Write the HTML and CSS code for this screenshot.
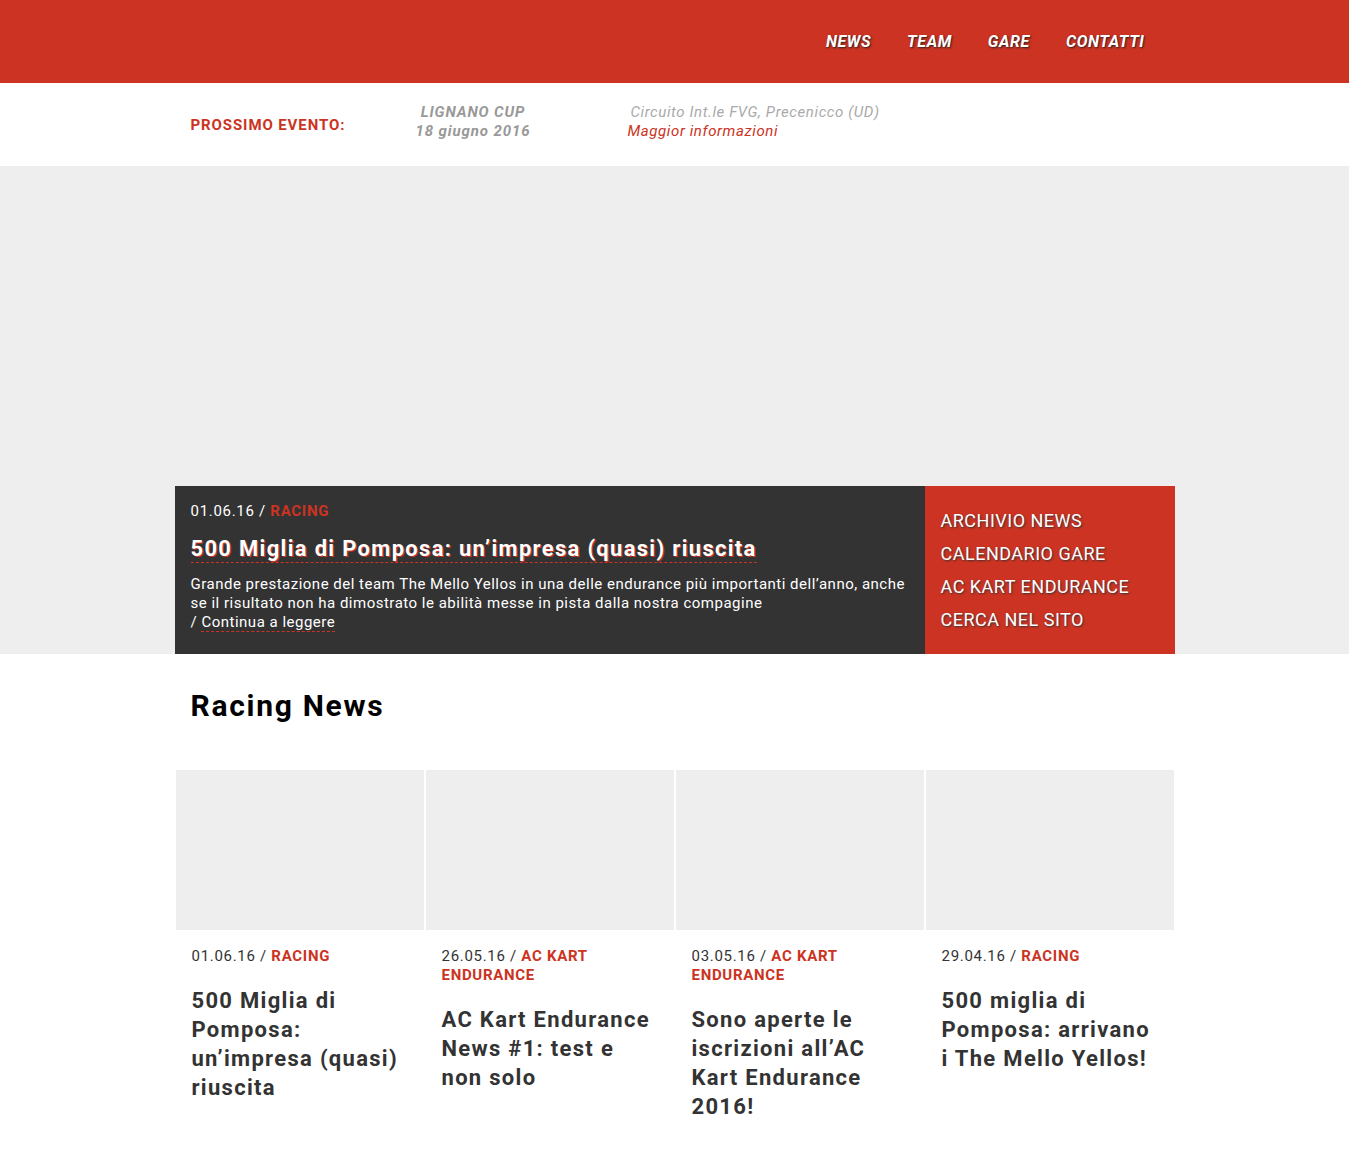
FILE: index.html
```html
<!DOCTYPE html>
<html lang="it">
<head>
<meta charset="utf-8">
<title>The Mello Yellos</title>
<link rel="stylesheet" href="styles.css">
</head>
<body>
<div class="page">
  <header class="topbar">
    <nav class="container nav">
      <a href="#">NEWS</a>
      <a href="#">TEAM</a>
      <a href="#">GARE</a>
      <a href="#">CONTATTI</a>
    </nav>
  </header>

  <section class="eventbar">
    <div class="container event">
      <div class="event-label">PROSSIMO EVENTO:</div>
      <div class="event-name">
        <div>LIGNANO CUP</div>
        <div>18 giugno 2016</div>
      </div>
      <div class="event-place">
        <div class="place">Circuito Int.le FVG, Precenicco (UD)</div>
        <a class="more" href="#">Maggior informazioni</a>
      </div>
    </div>
  </section>

  <section class="hero">
    <div class="container hero-inner">
      <article class="feature">
        <div class="meta light">01.06.16 / <span class="cat">RACING</span></div>
        <h1 class="feature-title"><a href="#">500 Miglia di Pomposa: un’impresa (quasi) riuscita</a></h1>
        <p class="feature-text">Grande prestazione del team The Mello Yellos in una delle endurance più importanti dell’anno, anche se il risultato non ha dimostrato le abilità messe in pista dalla nostra compagine<br>/ <a href="#">Continua a leggere</a></p>
      </article>
      <ul class="quicklinks">
        <li><a href="#">ARCHIVIO NEWS</a></li>
        <li><a href="#">CALENDARIO GARE</a></li>
        <li><a href="#">AC KART ENDURANCE</a></li>
        <li><a href="#">CERCA NEL SITO</a></li>
      </ul>
    </div>
  </section>

  <section class="container news">
    <h2 class="news-heading">Racing News</h2>
    <div class="cards">
      <article class="card">
        <div class="thumb"></div>
        <div class="card-body">
          <div class="meta">01.06.16 / <span class="cat">RACING</span></div>
          <h3>500 Miglia di Pomposa: un’impresa (quasi) riuscita</h3>
        </div>
      </article>
      <article class="card">
        <div class="thumb"></div>
        <div class="card-body">
          <div class="meta">26.05.16 / <span class="cat">AC KART</span><br><span class="cat">ENDURANCE</span></div>
          <h3>AC Kart Endurance News #1: test e non solo</h3>
        </div>
      </article>
      <article class="card">
        <div class="thumb"></div>
        <div class="card-body">
          <div class="meta">03.05.16 / <span class="cat">AC KART</span><br><span class="cat">ENDURANCE</span></div>
          <h3>Sono aperte le iscrizioni all’AC Kart Endurance 2016!</h3>
        </div>
      </article>
      <article class="card">
        <div class="thumb"></div>
        <div class="card-body">
          <div class="meta">29.04.16 / <span class="cat">RACING</span></div>
          <h3>500 miglia di Pomposa: arrivano i The Mello Yellos!</h3>
        </div>
      </article>
    </div>
  </section>
</div>
</body>
</html>
```

FILE: styles.css
```css
* { box-sizing: border-box; }
html, body { margin: 0; padding: 0; background: #fff; }
body {
  font-family: Roboto, "Liberation Sans", sans-serif;
  color: #333;
}
a { color: inherit; text-decoration: none; }
.page { margin-right: 17px; }
.container { width: 1000px; margin: 0 auto; }

.topbar { background: #cc3322; height: 83px; }
.nav {
  display: flex;
  justify-content: flex-end;
  align-items: center;
  height: 83px;
  padding-right: 30px;
  gap: 36px;
}
.nav a {
  color: #fff;
  font-style: italic;
  font-weight: 700;
  font-size: 16px;
  letter-spacing: 0.6px;
  text-shadow: 1px 1px 2px #222;
}

.eventbar { height: 83px; background: #fff; }
.event {
  display: flex;
  align-items: center;
  height: 83px;
  padding-left: 16px;
}
.event-label {
  width: 200px;
  color: #cc3322;
  font-weight: 700;
  font-size: 15px;
  letter-spacing: 0.9px;
}
.event-name {
  width: 165px;
  text-align: center;
  color: #999;
  font-style: italic;
  font-weight: 700;
  font-size: 15px;
  line-height: 19px;
  letter-spacing: 0.9px;
  margin-top: -5px;
}
.event-place {
  margin-left: 72px;
  font-style: italic;
  font-size: 15px;
  line-height: 19px;
  letter-spacing: 0.6px;
  margin-top: -5px;
}
.event-place .place { color: #aaa; padding-left: 3px; }
.event-place .more { color: #cc3322; }

.hero { background: #eeeeee; height: 488px; display: flex; align-items: flex-end; }
.hero-inner { display: flex; height: 168px; }
.feature {
  width: 750px;
  background: #333;
  color: #fff;
  padding: 16px 16px 0 16px;
}
.meta { font-size: 15px; line-height: 19px; color: #333; letter-spacing: 0.7px; }
.meta.light { color: #fff; }
.cat { color: #cc3322; font-weight: 700; }
.feature-title {
  margin: 14px 0 0;
  font-size: 22px;
  line-height: 28px;
  font-weight: 700;
  letter-spacing: 1.3px;
}
.feature-title a {
  text-shadow: 1px 1px 0 #cc3322;
  border-bottom: 1px dashed #cc3322;
  padding-bottom: 1px;
}
.feature-text {
  margin: 12px 0 0;
  font-size: 15px;
  line-height: 19px;
  letter-spacing: 0.5px;
}
.feature-text a { border-bottom: 1px dashed #cc3322; }

.quicklinks {
  width: 250px;
  background: #cc3322;
  list-style: none;
  margin: 0;
  padding: 18px 16px 0;
}
.quicklinks li {
  font-size: 18px;
  line-height: 33px;
  color: #fff;
  letter-spacing: 0.5px;
  text-shadow: 1px 1px 2px #333;
}

.news-heading {
  margin: 0;
  padding: 34px 16px 0;
  font-size: 30px;
  line-height: 36px;
  font-weight: 700;
  color: #000;
  letter-spacing: 1.7px;
}
.cards {
  display: grid;
  grid-template-columns: repeat(4, 1fr);
  margin-top: 46px;
}
.card { padding: 0 1px; }
.thumb { height: 160px; background: #eeeeee; }
.card-body { padding: 17px 14px 40px 16px; }
.card h3 {
  margin: 20px 0 0;
  font-size: 22px;
  line-height: 29px;
  font-weight: 700;
  color: #333;
  letter-spacing: 1.3px;
}
```
